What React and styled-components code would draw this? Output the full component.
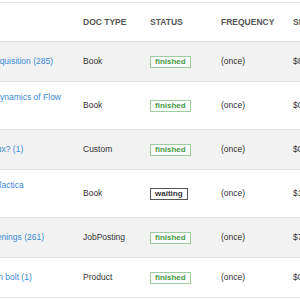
import React from "react";
import styled, { createGlobalStyle } from "styled-components";

const docs = [
  { title: "Language Acquisition (285)", type: "Book", status: "finished", spend: "$8.40" },
  { title: "Basic Fluid Dynamics of Flow (2)", type: "Book", status: "finished", spend: "$0.00" },
  { title: "Why use Linux? (1)", type: "Custom", status: "finished", spend: "$0.00" },
  { title: "Battlestar Galactica Collection", type: "Book", status: "waiting", spend: "$1.20" },
  { title: "New Job Openings (261)", type: "JobPosting", status: "finished", spend: "$7.83" },
  { title: "Hex head iron bolt (1)", type: "Product", status: "finished", spend: "$0.00" },
];

const columns = [
  { label: "", width: 133 },
  { label: "Doc Type", width: 67 },
  { label: "Status", width: 71 },
  { label: "Frequency", width: 72 },
  { label: "Spend", width: 90 },
];

export default function App() {
  return (
    <>
      <GlobalStyle />
      <Viewport>
        <Table>
          <colgroup>
            {columns.map((c, i) => (
              <col key={i} style={{ width: c.width }} />
            ))}
          </colgroup>
          <thead>
            <tr>
              {columns.map((c, i) => (
                <HeadCell key={i}>{c.label}</HeadCell>
              ))}
            </tr>
          </thead>
          <tbody>
            {docs.map((doc, index) => (
              <Row key={index} $striped={index % 2 === 0}>
                <Cell>
                  <TitleLink href="#">{doc.title}</TitleLink>
                </Cell>
                <Cell>{doc.type}</Cell>
                <Cell>
                  <Badge $status={doc.status}>{doc.status}</Badge>
                </Cell>
                <Cell>(once)</Cell>
                <Cell>{doc.spend}</Cell>
              </Row>
            ))}
          </tbody>
        </Table>
      </Viewport>
    </>
  );
}

const GlobalStyle = createGlobalStyle`
  html, body {
    margin: 0;
    padding: 0;
    background: #fff;
  }
  body {
    font-family: "Liberation Sans", Arial, sans-serif;
  }
`;

const Viewport = styled.div`
  width: 300px;
  height: 300px;
  padding-top: 2px;
  box-sizing: border-box;
  overflow: hidden;
`;

const Table = styled.table`
  margin-left: -60px;
  width: 433px;
  table-layout: fixed;
  border-collapse: collapse;
  border-top: 1px solid #e4e4e4;
  font-size: 8.5px;
  color: #333;
`;

const HeadCell = styled.th`
  height: 38px;
  padding: 0 10px;
  text-align: left;
  text-transform: uppercase;
  font-weight: bold;
  color: #555;
  white-space: nowrap;
  border-bottom: 1px solid #dcdcdc;
`;

const Row = styled.tr`
  background: ${(p) => (p.$striped ? "#f2f2f2" : "#fff")};
  border-bottom: 1px solid #e2e2e2;
`;

const Cell = styled.td`
  height: 40px;
  box-sizing: border-box;
  padding: 8px 10px 9px;
  line-height: 15px;
  vertical-align: middle;
  white-space: nowrap;
  &:first-child {
    white-space: normal;
  }
`;

const TitleLink = styled.a`
  color: #3a8ad6;
  text-decoration: none;
`;

const Badge = styled.span`
  display: inline-block;
  padding: 0 4px;
  font-size: 8px;
  line-height: 10px;
  font-weight: bold;
  background: #fff;
  color: ${(p) => (p.$status === "finished" ? "#3f9a3f" : "#333")};
  border: 1px solid ${(p) => (p.$status === "finished" ? "#9ccf9c" : "#555")};
`;
